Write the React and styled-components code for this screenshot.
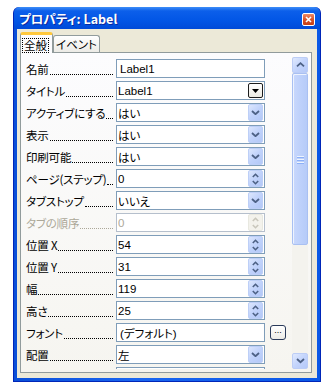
import React from "react";
import styled, { createGlobalStyle } from "styled-components";

const Global = createGlobalStyle`
  body {
    margin: 0;
    background: #ffffff;
  }
`;

const Window = styled.div`
  margin: 7px 0 0 13px;
  width: 308px;
  height: 375px;
  box-sizing: border-box;
  border: 1px solid #0026b8;
  border-top: none;
  border-radius: 6px 6px 0 0;
  background: linear-gradient(to right, #0a4fd8, #1a66f0 40%, #0a58e6);
  padding: 0 3px 3px;
  display: flex;
  flex-direction: column;
`;

const TitleBar = styled.div`
  height: 22px;
  margin: 0 -3px;
  padding: 0 5px 0 5px;
  box-sizing: border-box;
  border-radius: 6px 6px 0 0;
  background: linear-gradient(#3d8ef8 0%, #0c5fea 18%, #0256e6 60%, #004ad8 100%);
  display: flex;
  align-items: center;
  justify-content: space-between;
  color: #ffffff;
  font: bold 12.5px "Noto Sans CJK JP", "DejaVu Sans", sans-serif;
  font-feature-settings: "palt";
  text-shadow: 1px 1px 0 #0a2aa0;
`;

const CloseButton = styled.div`
  width: 13px;
  height: 13px;
  margin-top: 3px;
  box-sizing: border-box;
  border: 1px solid #ffffff;
  border-radius: 2px;
  background: linear-gradient(#ee8a66, #d8532b 50%, #c43d14);
  display: flex;
  align-items: center;
  justify-content: center;
`;

const Body = styled.div`
  flex: 1;
  background: #ece9d8;
  display: flex;
  flex-direction: column;
`;

const TabRow = styled.div`
  height: 23px;
  padding: 3px 0 0 3px;
  box-sizing: border-box;
  display: flex;
  align-items: flex-end;
  font: 11.5px "Noto Sans CJK JP", sans-serif;
  font-feature-settings: "palt";
`;

const Tab = styled.div`
  position: relative;
  z-index: ${(p) => (p.$active ? 2 : 1)};
  box-sizing: border-box;
  height: ${(p) => (p.$active ? "21px" : "17px")};
  margin-bottom: ${(p) => (p.$active ? "-1px" : "0")};
  padding: ${(p) => (p.$active ? "2px 4px 0 2px" : "0 2px 0 2px")};
  border: 1px solid #919b9c;
  border-bottom: none;
  border-top: ${(p) => (p.$active ? "3px solid #ffc83c" : "1px solid #919b9c")};
  border-radius: 3px 3px 0 0;
  background: ${(p) =>
    p.$active ? "#fcfcfe" : "linear-gradient(#ffffff, #ecebe6)"};
  display: flex;
  align-items: center;
  color: #000;
`;

const FocusText = styled.span`
  outline: 1px dotted #000;
  outline-offset: 0;
  line-height: 13px;
  padding: 0 1px;
`;

const Panel = styled.div`
  height: 321px;
  margin: 0 5px 0 3px;
  box-sizing: border-box;
  border: 1px solid #919b9c;
  background: linear-gradient(#fcfcfe, #f6f5f0);
  display: flex;
`;

const RowsArea = styled.div`
  width: 265px;
  height: 316px;
  box-sizing: border-box;
  padding: 6px 0 0 5px;
  overflow: hidden;
  display: flex;
  flex-direction: column;
  gap: 3px;
`;

const Row = styled.div`
  height: 19px;
  display: flex;
  flex-shrink: 0;
`;

const Label = styled.div`
  width: 87px;
  margin-right: 3px;
  display: flex;
  align-items: center;
  color: ${(p) => (p.$disabled ? "#aca899" : "#000")};
  font: 11.5px "Noto Sans CJK JP", sans-serif;
  font-feature-settings: "palt";
  letter-spacing: -0.2px;
  white-space: nowrap;
`;

const Leader = styled.span`
  flex: 1;
  align-self: flex-end;
  margin: 0 0 3px 1px;
  border-bottom: 1px dotted ${(p) => (p.$disabled ? "#aca899" : "#000")};
`;

const Field = styled.div`
  width: 149px;
  box-sizing: border-box;
  border: 1px solid ${(p) => (p.$disabled ? "#b5bfcc" : "#7f9db9")};
  background: #ffffff;
  display: flex;
  align-items: center;
  padding: 0 1px 0 ${(p) => (p.$pad ? "3px" : "1px")};
  color: ${(p) => (p.$disabled ? "#aca899" : "#000")};
  font: 11.5px "Liberation Sans", "Noto Sans CJK JP", sans-serif;
  font-feature-settings: "palt";
`;

const Value = styled.span`
  flex: 1;
  white-space: nowrap;
  overflow: hidden;
`;

const ArrowButton = styled.div`
  width: 15px;
  height: 17px;
  box-sizing: border-box;
  border: 1px solid ${(p) => (p.$disabled ? "#e8e8e0" : "#bdcff7")};
  border-radius: 2px;
  background: ${(p) =>
    p.$disabled
      ? "#f3f2ec"
      : "linear-gradient(135deg, #dce6fd, #c0d2fb 50%, #b3c8f7)"};
  display: flex;
  flex-direction: column;
  align-items: center;
  justify-content: center;
  gap: ${(p) => (p.$spin ? "2px" : "0")};
`;

const PickButton = styled.div`
  width: 15px;
  height: 15px;
  box-sizing: border-box;
  border: 1px solid #1c1c1c;
  border-radius: 2px;
  background: linear-gradient(#ffffff, #eceae2);
  display: flex;
  align-items: center;
  justify-content: center;
`;

const BuilderSlot = styled.div`
  width: 16px;
  margin-left: 5px;
  display: flex;
  align-items: center;
`;

const BuilderButton = styled.div`
  width: 16px;
  height: 15px;
  box-sizing: border-box;
  border: 1px solid #2a3a5a;
  border-radius: 3px;
  background: linear-gradient(#ffffff, #ecebe6);
  font: 9px "Liberation Sans", sans-serif;
  line-height: 9px;
  text-align: center;
  color: #000;
`;

const ScrollBar = styled.div`
  width: 16px;
  height: 312px;
  margin: 4px 0 0 6px;
  background: #f4f3ee;
  display: flex;
  flex-direction: column;
`;

const ScrollArrow = styled.div`
  height: 16px;
  box-sizing: border-box;
  border: 1px solid #bccdf6;
  border-radius: 2px;
  background: linear-gradient(135deg, #e0e9fe, #c3d4fc 50%, #b5c9f8);
  display: flex;
  align-items: center;
  justify-content: center;
`;

const Thumb = styled.div`
  height: 172px;
  box-sizing: border-box;
  border: 1px solid #a9c0f2;
  border-radius: 2px;
  background: linear-gradient(to right, #c9d8fc, #bed1fb 50%, #b6cbf8);
  box-shadow: inset 1px 1px 0 #eef3fe;
  display: flex;
  flex-direction: column;
  align-items: center;
  justify-content: flex-end;
  padding-bottom: 80px;
  gap: 1px;
`;

const Grip = styled.div`
  width: 7px;
  height: 1px;
  background: #eef4fe;
  border-bottom: 1px solid #8cb0f8;
`;

const Track = styled.div`
  flex: 1;
`;

const Chevron = ({ up, color = "#4d6185", size = 9 }) => (
  <svg width={size} height={size * 0.6} viewBox="0 0 9 5">
    <polyline
      points={up ? "1,4.2 4.5,1 8,4.2" : "1,0.8 4.5,4 8,0.8"}
      fill="none"
      stroke={color}
      strokeWidth="1.8"
    />
  </svg>
);

const SmallChevron = ({ up, color }) => (
  <svg width="7" height="5" viewBox="0 0 7 5">
    <polyline
      points={up ? "0.8,4 3.5,1.3 6.2,4" : "0.8,1 3.5,3.7 6.2,1"}
      fill="none"
      stroke={color}
      strokeWidth="1.6"
    />
  </svg>
);

const rows = [
  { label: "名前", value: "Label1", kind: "text" },
  { label: "タイトル", value: "Label1", kind: "pick" },
  { label: "アクティブにする", value: "はい", kind: "drop" },
  { label: "表示", value: "はい", kind: "drop" },
  { label: "印刷可能", value: "はい", kind: "drop" },
  { label: "ページ(ステップ)", value: "0", kind: "spin" },
  { label: "タブストップ", value: "いいえ", kind: "drop" },
  { label: "タブの順序", value: "0", kind: "spin", disabled: true },
  { label: "位置 X", value: "54", kind: "spin" },
  { label: "位置 Y", value: "31", kind: "spin" },
  { label: "幅", value: "119", kind: "spin" },
  { label: "高さ", value: "25", kind: "spin" },
  { label: "フォント", value: "(デフォルト)", kind: "text", builder: "..." },
  { label: "配置", value: "左", kind: "drop" },
  // next row is only peeking in under the panel edge
  { label: "", value: "", kind: "text", builder: " " },
];

const Control = ({ kind, disabled }) => {
  if (kind === "drop")
    return (
      <ArrowButton>
        <Chevron />
      </ArrowButton>
    );
  if (kind === "spin") {
    const c = disabled ? "#c9c7bc" : "#4d6185";
    return (
      <ArrowButton $disabled={disabled} $spin>
        <SmallChevron up color={c} />
        <SmallChevron color={c} />
      </ArrowButton>
    );
  }
  if (kind === "pick")
    return (
      <PickButton>
        <svg width="7" height="4" viewBox="0 0 7 4">
          <polygon points="0,0 7,0 3.5,4" fill="#000" />
        </svg>
      </PickButton>
    );
  return null;
};

export default function App() {
  return (
    <>
      <Global />
      <Window>
        <TitleBar>
          <span>プロパティ: Label</span>
          <CloseButton>
            <svg width="7" height="7" viewBox="0 0 7 7">
              <path d="M1 1L6 6M6 1L1 6" stroke="#fff" strokeWidth="1.6" />
            </svg>
          </CloseButton>
        </TitleBar>
        <Body>
          <TabRow>
            <Tab $active>
              <FocusText>全般</FocusText>
            </Tab>
            <Tab>イベント</Tab>
          </TabRow>
          <Panel>
            <RowsArea>
              {rows.map((r, i) => (
                <Row key={i}>
                  <Label $disabled={r.disabled}>
                    {r.label}
                    {r.label && <Leader $disabled={r.disabled} />}
                  </Label>
                  <Field $disabled={r.disabled} $pad={r.kind === "text"}>
                    <Value>{r.value}</Value>
                    <Control kind={r.kind} disabled={r.disabled} />
                  </Field>
                  <BuilderSlot>
                    {r.builder && <BuilderButton>{r.builder.trim()}</BuilderButton>}
                  </BuilderSlot>
                </Row>
              ))}
            </RowsArea>
            <ScrollBar>
              <ScrollArrow>
                <Chevron up />
              </ScrollArrow>
              <Thumb>
                <Grip />
                <Grip />
                <Grip />
              </Thumb>
              <Track />
              <ScrollArrow>
                <Chevron />
              </ScrollArrow>
            </ScrollBar>
          </Panel>
        </Body>
      </Window>
    </>
  );
}
